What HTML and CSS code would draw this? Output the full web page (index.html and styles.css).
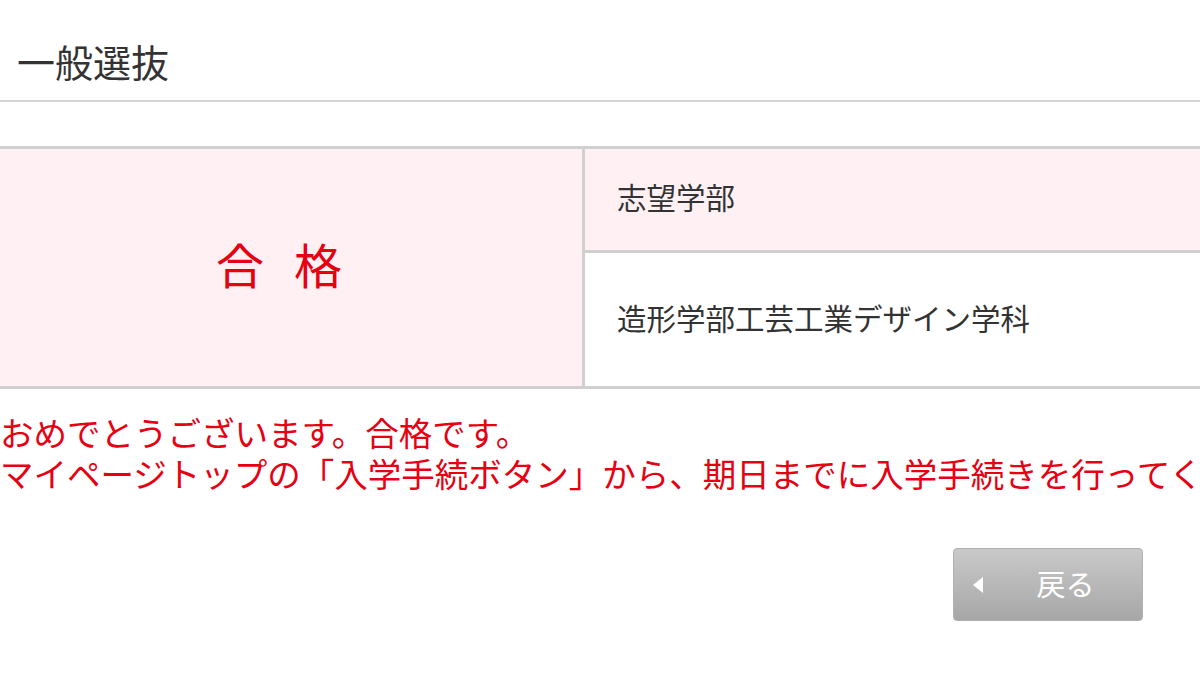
FILE: index.html
```html
<!DOCTYPE html>
<html lang="ja">
<head>
<meta charset="utf-8">
<title>一般選抜</title>
<link rel="stylesheet" href="styles.css">
</head>
<body>
<div class="page">
  <header class="header">
    <h1 class="title">一般選抜</h1>
  </header>
  <div class="result">
    <div class="status">合格</div>
    <div class="label">志望学部</div>
    <div class="value">造形学部工芸工業デザイン学科</div>
  </div>
  <div class="message">
    <p>おめでとうございます。合格です。</p>
    <p>マイページトップの「入学手続ボタン」から、期日までに入学手続きを行ってください。</p>
  </div>
  <div class="actions">
    <button class="back" type="button"><span class="arrow"></span><span class="back-text">戻る</span></button>
  </div>
</div>
</body>
</html>
```

FILE: styles.css
```css
html, body {
  margin: 0;
  padding: 0;
  background: #ffffff;
  overflow: hidden;
}
body {
  width: 1200px;
  height: 675px;
  font-family: "Noto Sans CJK JP", "Noto Sans", sans-serif;
  color: #333333;
}
.page {
  width: 1200px;
}
.header {
  height: 102px;
  border-bottom: 2px solid #d4d4d4;
  box-sizing: border-box;
  padding: 42px 0 0 17px;
}
.title {
  margin: 0;
  font-size: 38px;
  line-height: 38px;
  font-weight: 400;
  color: #333333;
  white-space: nowrap;
}
.result {
  margin-top: 44px;
  width: 1400px;
  display: grid;
  grid-template-columns: 585px 1fr;
  grid-template-rows: 104px 133px;
  border-top: 3px solid #d0d0d0;
  border-bottom: 3px solid #d0d0d0;
}
.status {
  grid-row: 1 / span 2;
  background: #fff0f4;
  border-right: 3px solid #d0d0d0;
  display: flex;
  align-items: center;
  justify-content: center;
  color: #e60012;
  font-size: 48px;
  letter-spacing: 30px;
  padding-left: 6px;
  padding-bottom: 10px;
  box-sizing: border-box;
}
.label {
  background: #fff0f4;
  border-bottom: 3px solid #d0d0d0;
  display: flex;
  align-items: center;
  padding-left: 32px;
  padding-bottom: 8px;
  font-size: 29.5px;
  color: #333333;
}
.value {
  display: flex;
  align-items: center;
  padding-left: 32px;
  padding-bottom: 5px;
  font-size: 29.5px;
  color: #333333;
}
.message {
  margin-top: 22px;
  color: #e60012;
  font-size: 33.5px;
  line-height: 41px;
  white-space: nowrap;
}
.message p {
  margin: 0;
}
.actions {
  margin-top: 55px;
  display: flex;
  justify-content: flex-end;
  padding-right: 57px;
}
.back {
  width: 190px;
  height: 73px;
  border: 1px solid #b0b0b0;
  border-radius: 4px;
  background: linear-gradient(#c9c9c9, #a7a7a7);
  display: flex;
  align-items: center;
  padding: 0 0 0 19px;
  box-sizing: border-box;
  font-family: "Noto Sans CJK JP", "Noto Sans", sans-serif;
  cursor: pointer;
}
.arrow {
  width: 0;
  height: 0;
  border-top: 8px solid transparent;
  border-bottom: 8px solid transparent;
  border-right: 10px solid #ffffff;
}
.back-text {
  flex: 1;
  text-align: center;
  color: #ffffff;
  font-size: 29px;
  line-height: 1;
  padding-left: 6px;
  padding-bottom: 2px;
}
```
